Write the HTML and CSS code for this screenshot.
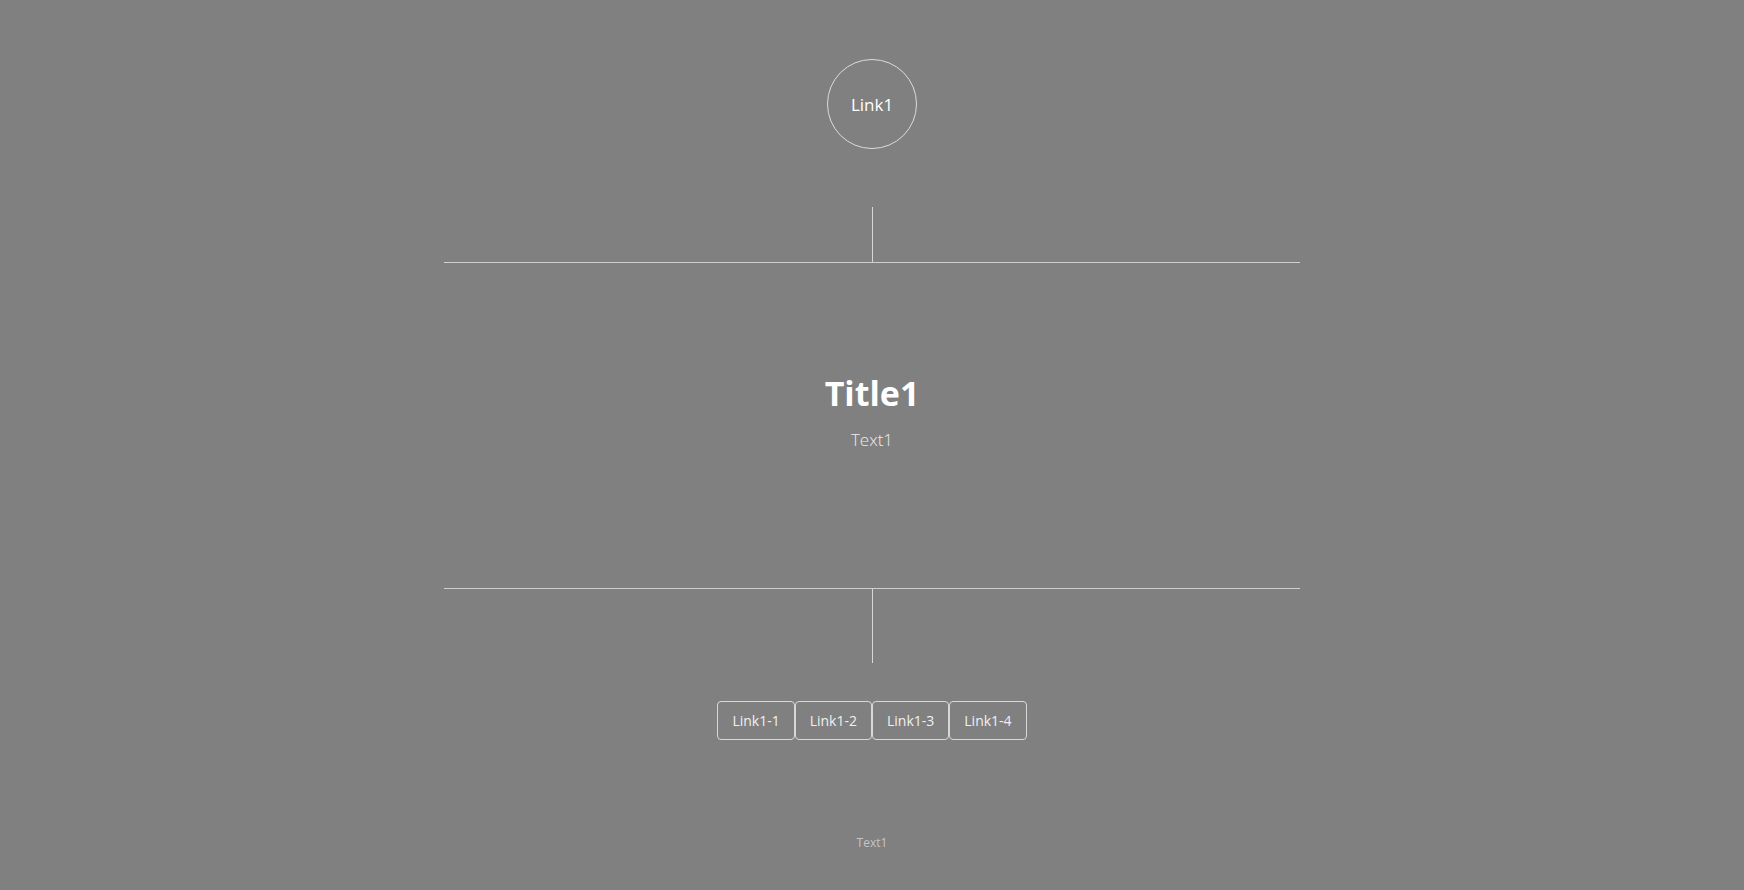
FILE: index.html
```html
<!DOCTYPE html>
<html lang="en">
<head>
<meta charset="utf-8">
<title>Page</title>
<link rel="stylesheet" href="styles.css">
</head>
<body>
<div class="page">
  <a class="circle" href="#">Link1</a>
  <div class="vline vline-top"></div>
  <div class="hline"></div>
  <section class="hero">
    <h1 class="title">Title1</h1>
    <p class="subtitle">Text1</p>
  </section>
  <div class="hline"></div>
  <div class="vline vline-bottom"></div>
  <nav class="buttons">
    <a class="btn" href="#">Link1-1</a>
    <a class="btn" href="#">Link1-2</a>
    <a class="btn" href="#">Link1-3</a>
    <a class="btn" href="#">Link1-4</a>
  </nav>
  <footer class="footer">Text1</footer>
</div>
</body>
</html>
```

FILE: styles.css
```css
html, body {
  margin: 0;
  padding: 0;
  background: #808080;
  height: 100%;
}
body {
  font-family: "Open Sans", "Noto Sans", sans-serif;
  color: #fff;
  overflow: hidden;
}
.page {
  display: flex;
  flex-direction: column;
  align-items: center;
  padding-top: 59px;
}
.circle {
  box-sizing: border-box;
  width: 90px;
  height: 90px;
  border: 1px solid #dcdcdc;
  border-radius: 50%;
  display: flex;
  align-items: center;
  justify-content: center;
  color: #fff;
  text-decoration: none;
  font-size: 17px;
  line-height: 1;
}
.vline {
  width: 1px;
  background: #d6d6d6;
}
.vline-top {
  margin-top: 58px;
  height: 55px;
}
.vline-bottom {
  height: 74px;
}
.hline {
  width: 856px;
  height: 1px;
  background: #d0d0d0;
}
.hero {
  height: 325px;
  box-sizing: border-box;
  padding-top: 108px;
  display: flex;
  flex-direction: column;
  align-items: center;
}
.title {
  margin: 0;
  font-size: 34px;
  line-height: 44px;
  font-weight: 700;
  color: #fff;
}
.subtitle {
  margin: 11px 0 0;
  font-size: 17px;
  line-height: 28px;
  font-weight: 300;
  color: #ececec;
}
.buttons {
  margin-top: 38px;
  display: flex;
}
.btn {
  box-sizing: border-box;
  height: 39px;
  padding: 0 14px;
  border: 1px solid #d8d8d8;
  border-radius: 4px;
  display: flex;
  align-items: center;
  color: #f0f0f0;
  text-decoration: none;
  font-size: 14px;
}
.footer {
  margin-top: 94px;
  font-size: 12px;
  line-height: 18px;
  color: #c4c4c4;
}
```
